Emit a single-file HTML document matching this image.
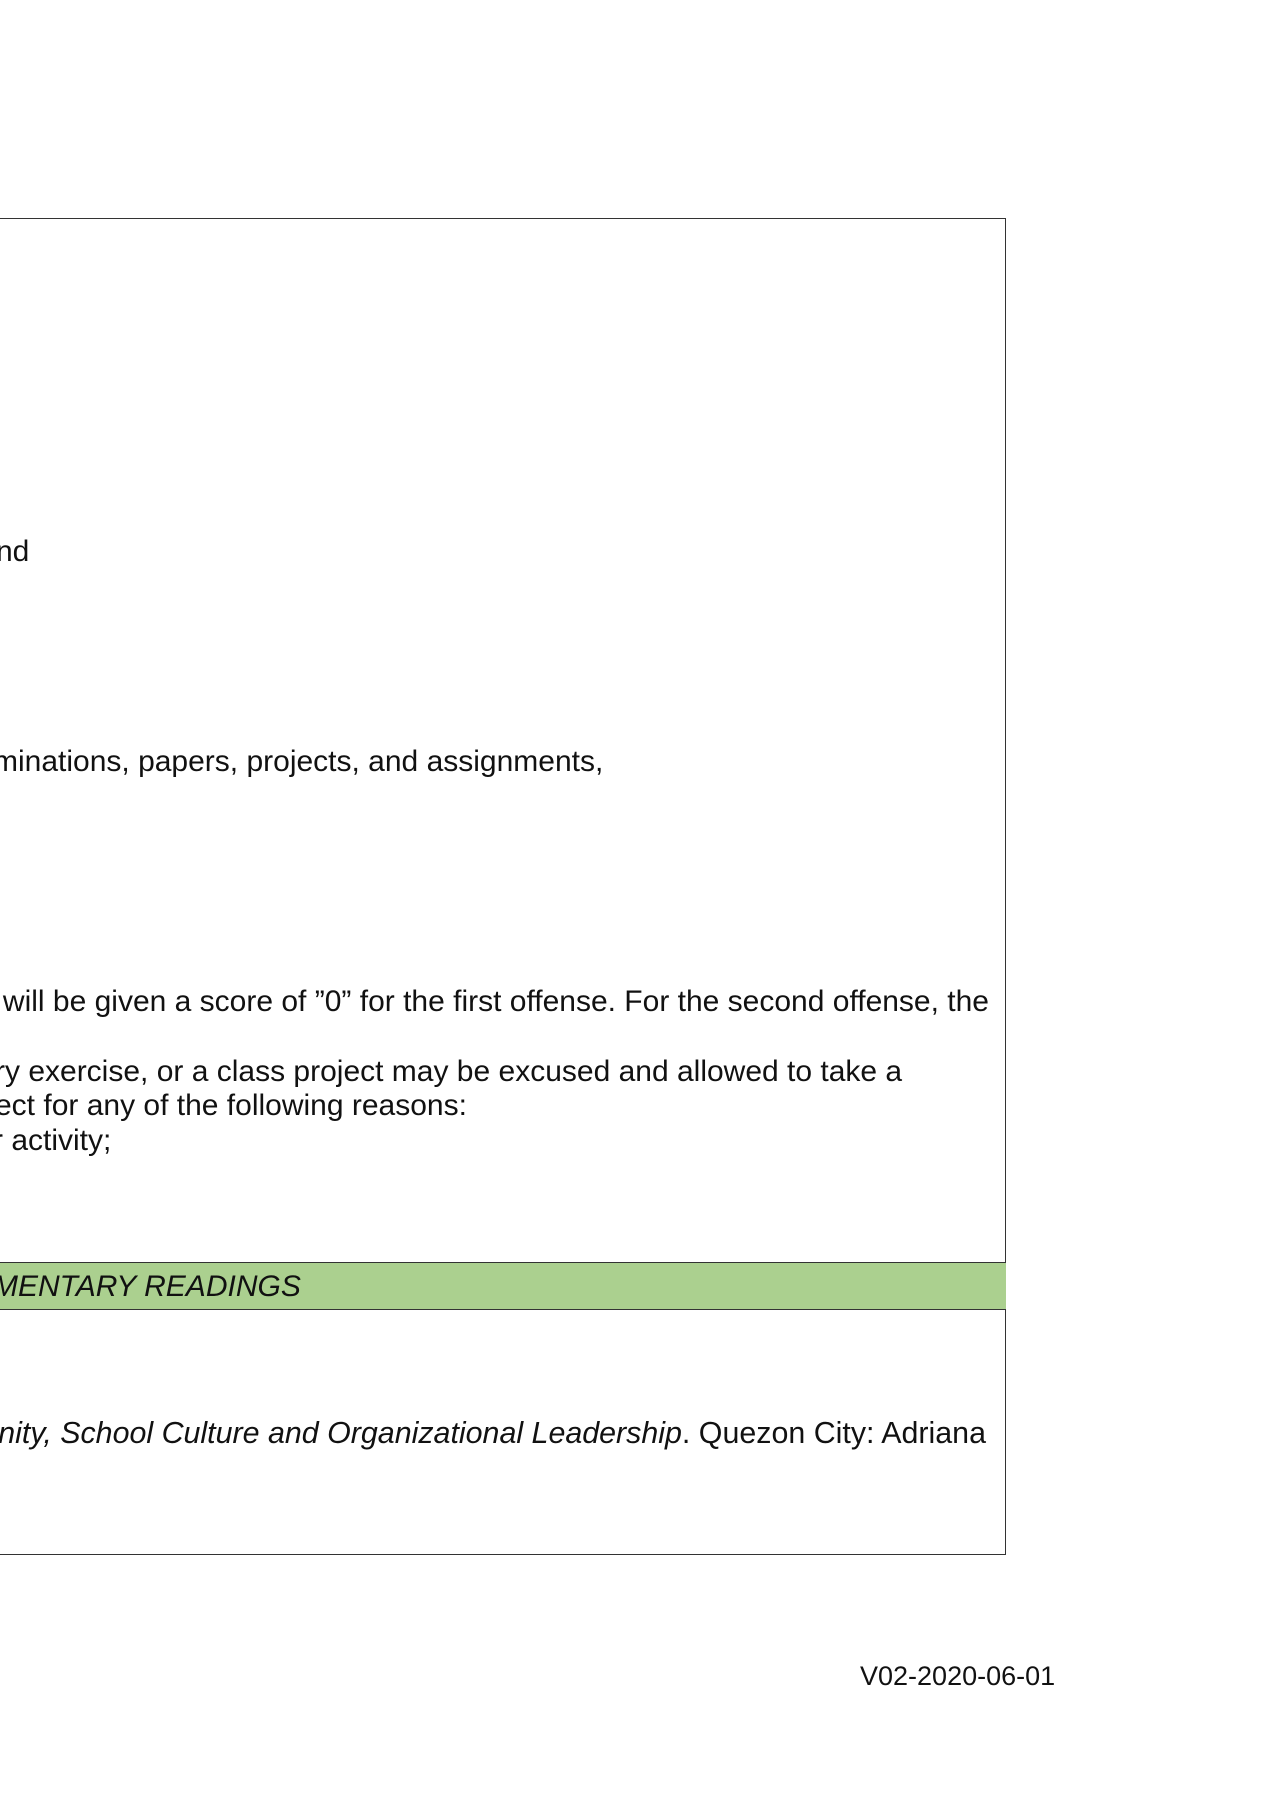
<!DOCTYPE html>
<html><head><style>
html,body{margin:0;padding:0;background:#fff;}
body{width:1273px;height:1800px;position:relative;overflow:hidden;font-family:"Liberation Sans",Arial,sans-serif;color:#111;}
.box{position:absolute;left:-2px;top:218px;width:1008px;height:1337px;border:1.5px solid #333;box-sizing:border-box;}
.band{position:absolute;left:-2px;top:1262px;width:1008px;height:48px;background:#abd08f;border-top:1.5px solid #333;border-bottom:1.5px solid #333;box-sizing:border-box;}
.t{position:absolute;white-space:nowrap;font-size:30px;line-height:34px;}
.r{right:287px;}
</style></head><body>
<div class="box"></div>
<div class="band"></div>
<div class="t" style="left:-4px;top:535px">nd</div>
<div class="t" style="left:-7px;top:745px">minations, papers, projects, and assignments,</div>
<div class="t" style="right:284px;top:985px">will be given a score of ”0” for the first offense. For the second offense, the</div>
<div class="t" style="left:-5px;top:1055px">ry exercise, or a class project may be excused and allowed to take a</div>
<div class="t" style="left:-5px;top:1089px">ect for any of the following reasons:</div>
<div class="t" style="left:-7px;top:1124px">r activity;</div>
<div class="t" style="left:-7px;top:1270px;font-style:italic">MENTARY READINGS</div>
<div class="t r" style="top:1416px;font-size:30.4px"><i>nity, School Culture and Organizational Leadership</i>. Quezon City: Adriana</div>
<div class="t" style="left:860px;top:1659px;font-size:27px">V02-2020-06-01</div>
</body></html>
